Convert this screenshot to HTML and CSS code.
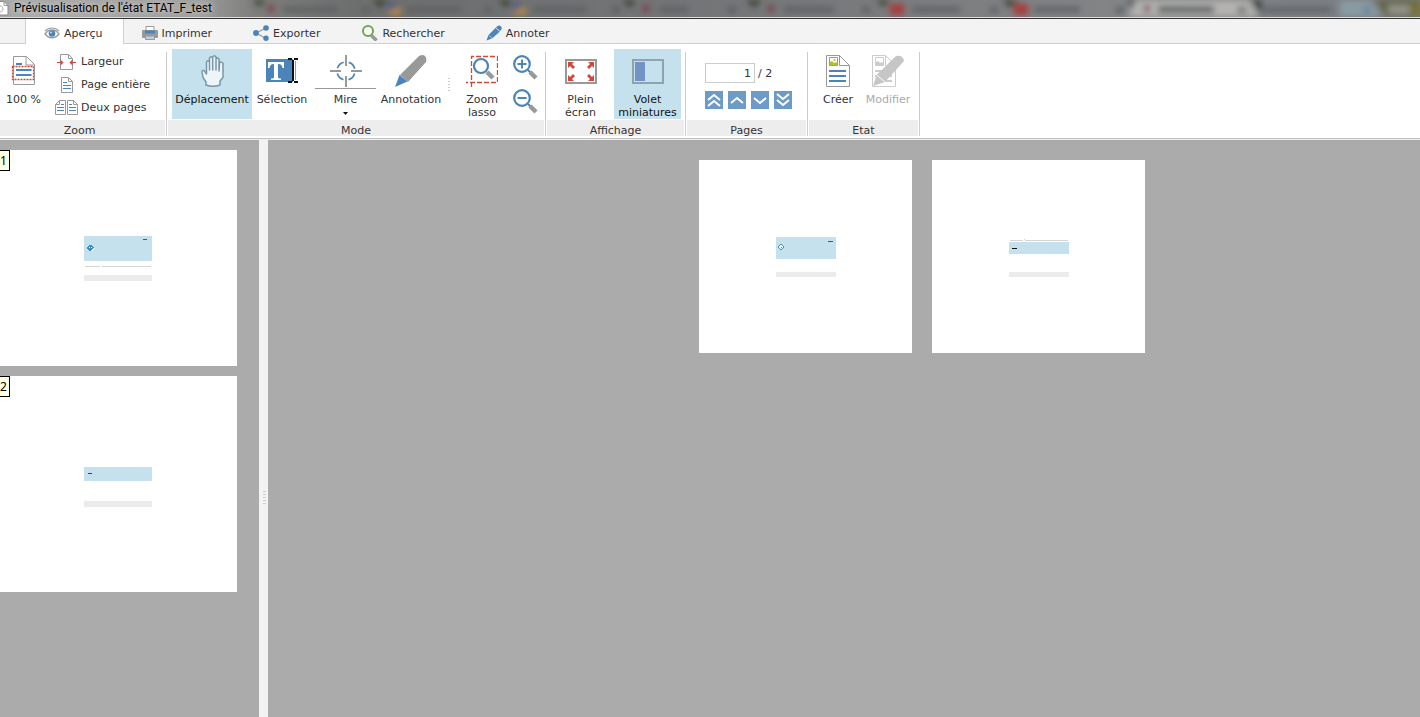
FILE: index.html
```html
<!DOCTYPE html>
<html lang="fr">
<head>
<meta charset="utf-8">
<title>Prévisualisation de l'état ETAT_F_test</title>
<link rel="stylesheet" href="styles.css">
</head>
<body>
<header class="titlebar">
  <svg class="glass" viewBox="0 0 1420 17" preserveAspectRatio="none" aria-hidden="true">
    <defs>
      <filter id="soft" x="-5%" y="-50%" width="110%" height="200%"><feGaussianBlur stdDeviation="3"/></filter>
      <linearGradient id="base" x1="0" x2="1" y1="0" y2="0">
        <stop offset="0" stop-color="#a9a9a9"/><stop offset=".14" stop-color="#9c9c9b"/><stop offset=".18" stop-color="#7d7d7c"/><stop offset=".25" stop-color="#6d6e6e"/><stop offset=".5" stop-color="#737577"/><stop offset=".8" stop-color="#838587"/><stop offset="1" stop-color="#787a7c"/>
      </linearGradient>
    </defs>
    <rect width="1420" height="17" fill="url(#base)"/>
    <g filter="url(#soft)">
      <path d="M252 0h14l-6 7zM372 0h16l-8 8zM498 0h14l-6 8zM622 0h14l-6 8zM746 0h16l-8 8zM876 0h14l-6 7zM1002 0h16l-8 8zM1128 0h14l-8 14zM1250 0h14l-2 14z" fill="#3a4230"/>
      <path d="M1136 0h113l10 17H1128z" fill="#b3b2b1"/>
      <path d="M1262 0h108l14 17H1262z" fill="#7b8085"/>
      <path d="M1340 0h30l12 17h-42z" fill="#899ba3"/>
      <path d="M1376 0h44v17h-34z" fill="#626342"/>
      <rect x="1388" y="5" width="22" height="9" fill="#94948a"/>
      <rect x="1412" y="2" width="8" height="15" fill="#77722e"/>
      <g fill="#5c5e60">
        <rect x="283" y="7" width="54" height="5"/><rect x="407" y="7" width="54" height="5"/><rect x="533" y="7" width="54" height="5"/><rect x="660" y="7" width="28" height="5"/><rect x="784" y="7" width="50" height="5"/><rect x="912" y="7" width="48" height="5"/><rect x="1034" y="7" width="46" height="5"/><rect x="1158" y="6" width="56" height="7"/><rect x="1264" y="7" width="68" height="5"/>
        <rect x="362" y="7" width="8" height="6"/><rect x="484" y="7" width="8" height="6"/><rect x="612" y="7" width="8" height="6"/><rect x="728" y="7" width="8" height="6"/><rect x="862" y="7" width="8" height="6"/><rect x="990" y="7" width="8" height="6"/><rect x="1116" y="7" width="8" height="6"/><rect x="1238" y="7" width="8" height="6"/>
      </g>
      <g fill="#7d3b45"><rect x="268" y="5" width="6" height="7"/><rect x="643" y="5" width="6" height="7"/><rect x="768" y="5" width="6" height="7"/><rect x="1144" y="5" width="6" height="7"/></g>
      <g fill="#a83a3a"><rect x="890" y="4" width="14" height="11"/><rect x="1014" y="4" width="14" height="11"/></g>
      <g fill="#b98a3c"><rect x="389" y="8" width="12" height="7"/><rect x="514" y="8" width="12" height="7"/></g>
      <g fill="#44598a"><rect x="388" y="3" width="7" height="7"/><rect x="513" y="3" width="7" height="7"/></g>
      <rect x="1364" y="7" width="6" height="6" fill="#4c789e"/>
    </g>
  </svg>
  <svg class="doc" width="9" height="16" viewBox="0 0 9 16" aria-hidden="true"><path d="M0 1.500h4l4 4v9.500H0" fill="#fff" stroke="#8a8a8a"/><path d="M4 1.500v4h4" fill="none" stroke="#999"/><path d="M0 6c4 0 4 6 0 6" fill="none" stroke="#aaa"/></svg>
  <h1 class="title">Prévisualisation de l'état ETAT_F_test</h1>
</header>

<nav class="tabs">
  <button class="tab active"><svg width="16" height="16" viewBox="0 0 16 16"><path d="M1 9c4-5.500 10-5.500 14 0-4 5-10 5-14 0z" fill="#fff" stroke="#999" stroke-width="1.300"/><path d="M1 6c4-4 10-4 14 0" fill="none" stroke="#999" stroke-width="1.200"/><circle cx="8" cy="8.500" r="3.300" fill="#4a84b8"/><circle cx="7" cy="7.500" r="1" fill="#cde"/></svg>Aperçu</button>
  <button class="tab"><svg width="16" height="16" viewBox="0 0 16 16"><path d="M4 6V1.500h8V6" fill="#fff" stroke="#999"/><rect y="5" width="16" height="8" rx="1" fill="#999"/><path d="M3 5.500h10v3H3z" fill="#4a84b8"/><path d="M3.500 11h9v3.500h-9z" fill="#b9d0e4" stroke="#999"/></svg>Imprimer</button>
  <button class="tab"><svg width="16" height="16" viewBox="0 0 16 16"><path d="M13 3L3 8l10 5.500" fill="none" stroke="#999" stroke-width="1.200"/><g fill="#4a84b8"><circle cx="13" cy="3" r="2.800"/><circle cx="3" cy="8" r="2.900"/><circle cx="13" cy="13.200" r="2.700"/></g></svg>Exporter</button>
  <button class="tab"><svg width="17" height="16" viewBox="0 0 17 16"><path d="M10.500 10.500l5 5" stroke="#999" stroke-width="3.500"/><circle cx="7" cy="6" r="5" fill="#fff" stroke="#6aa84f" stroke-width="2"/></svg>Rechercher</button>
  <button class="tab"><svg width="16" height="16" viewBox="0 0 16 16"><path d="M.5 15.500l2-5.500L10 2.500l4 4L6 13.500z" fill="#4a84b8"/><path d="M11 1.500q2.500-2 4 0t0 3.500l-1 1-4-3.500z" fill="#4a84b8"/><path d="M10 3l3.500 3.500M3 10.500l3 2.500" stroke="#c9dbea" stroke-width=".8"/></svg>Annoter</button>
</nav>

<section class="ribbon">
  <div class="group group-zoom">
    <div class="tools">
      <button class="tool tool-percent">
        <svg width="26" height="32" viewBox="0 0 26 32"><path d="M2.500 1.500h13l8 8v20h-21z" fill="#fff" stroke="#999"/><path d="M15 1.500v8.500h8.500" fill="none" stroke="#999"/><path d="M5 9h6M5 15h15.500M5 20h15.500" stroke="#4a84b8" stroke-width="2"/><path d="M1.500 11.500h21v13h-21z" fill="none" stroke="#d1473a" stroke-width="1.300" stroke-dasharray="2 1"/></svg>
        <span>100 %</span>
      </button>
      <div class="fit-list">
        <button class="fit"><svg width="24" height="18" viewBox="0 0 24 18"><path d="M6.500 1.500h8l4 4v11h-12z" fill="#fff" stroke="#999"/><path d="M14.500 1.500v4h4" fill="none" stroke="#999"/><path d="M3 9.500h5M22 9.500h-5" stroke="#d1473a"/><path d="M6.500 6.500l3 3-3 3zM18.500 6.500l-3 3 3 3z" fill="#d1473a"/></svg>Largeur</button>
        <button class="fit"><svg width="24" height="18" viewBox="0 0 24 18"><path d="M7.500 1.500h7l4 4v11h-11z" fill="#fff" stroke="#999"/><path d="M14.500 1.500v4h4" fill="none" stroke="#999"/><path d="M9 6.500h4M9 9.500h8M9 12.500h8" stroke="#4a84b8"/></svg>Page entière</button>
        <button class="fit"><svg width="24" height="18" viewBox="0 0 24 18"><g fill="#fff" stroke="#999"><path d="M1.500 5.500l4-4h6v14h-10zM13.500 1.500h6l4 4v10h-10z"/><path d="M5.500 1.500v4h-4M19.500 1.500v4h4" fill="none"/></g><path d="M7 5.500h3M3 8.500h7M3 11.500h7M15 5.500h3M15 8.500h7M15 11.500h7" stroke="#4a84b8"/></svg>Deux pages</button>
      </div>
    </div>
    <h2 class="caption">Zoom</h2>
  </div>
  <span class="divider"></span>

  <div class="group group-mode">
    <div class="tools">
      <button class="tool tool-move selected">
        <svg width="32" height="32" viewBox="0 0 32 32"><path d="M10 30v-3L7 22.500l-1-6q.5-2 2.500-.5l2 3V7q1.500-2.500 3 0v8V3q1.500-2.500 3.200 0v12V2q1.600-2.500 3.300 0v13V4q1.500-2 3 0v12l.5-8q2-2 3.500.5v14L24 26v4q-7 2.500-14 0z" fill="#edf4fa" stroke="#7996a6" stroke-width="1.500" stroke-linejoin="round"/></svg>
        <span>Déplacement</span>
      </button>
      <button class="tool tool-select">
        <svg width="32" height="32" viewBox="0 0 32 32"><path d="M0 4h27v23H0z" fill="#4a84b8"/><path d="M2 7h16v6h-1.500q-.5-4-4-4H12v13q0 1.500 3 1.500V25H5v-1.500q3 0 3-1.500V9h-.5q-3.500 0-4 4H2z" fill="#fff"/><path d="M22 4h4M28 4h4M22 27h4M28 27h4M27 5v21" stroke="#111" stroke-width="2"/><path d="M29.500 6v19" stroke="#999"/></svg>
        <span>Sélection</span>
      </button>
      <button class="tool tool-cross">
        <svg width="32" height="32" viewBox="0 0 32 32"><circle cx="16" cy="16" r="9" fill="none" stroke="#4a84b8" stroke-width="1.700" stroke-dasharray="9 5.137" stroke-dashoffset="-2.500"/><path d="M16 0v11M16 21v11M0 16h11M21 16h11" stroke="#999" stroke-width="2"/></svg>
        <span>Mire</span>
        <svg class="caret" width="5" height="3" viewBox="0 0 5 3"><path d="M0 0h5L2.500 3z" fill="#111"/></svg>
      </button>
      <button class="tool tool-annotate">
        <svg width="32" height="32" viewBox="0 0 32 32"><path d="M5 20L24 1q4-2 6 0t1 6L13 27z" fill="#999"/><path d="M4.500 20l8 6.500L0 32z" fill="#4a84b8"/></svg>
        <span>Annotation</span>
      </button>
      <span class="dots"></span>
      <button class="tool tool-lasso">
        <svg width="32" height="32" viewBox="0 0 32 32"><path d="M5.500 32V1.500h26v26H0" fill="none" stroke="#d1473a" stroke-width="1.300" stroke-dasharray="5 2"/><path d="M21 17l6 6" stroke="#999" stroke-width="4.500"/><circle cx="15" cy="11" r="7" fill="#fff" stroke="#4a84b8" stroke-width="2.200"/></svg>
        <span>Zoom<br>lasso</span>
      </button>
      <div class="zoom-pair">
        <button class="icon-button" aria-label="Agrandir"><svg width="25" height="25" viewBox="0 0 25 25"><path d="M15 15l3 3" stroke="#4a84b8" stroke-width="2"/><path d="M17 17l6 6" stroke="#999" stroke-width="4.500"/><circle cx="9" cy="9" r="7.800" fill="#fff" stroke="#4a84b8" stroke-width="2.200"/><path d="M4.500 9h9M9 4.500v9" stroke="#4a84b8" stroke-width="2"/></svg></button>
        <button class="icon-button" aria-label="Réduire"><svg width="25" height="25" viewBox="0 0 25 25"><path d="M15 15l3 3" stroke="#4a84b8" stroke-width="2"/><path d="M17 17l6 6" stroke="#999" stroke-width="4.500"/><circle cx="9" cy="9" r="7.800" fill="#fff" stroke="#4a84b8" stroke-width="2.200"/><path d="M4.500 9h9" stroke="#4a84b8" stroke-width="2"/></svg></button>
      </div>
    </div>
    <h2 class="caption">Mode</h2>
  </div>
  <span class="divider"></span>

  <div class="group group-display">
    <div class="tools">
      <button class="tool tool-full">
        <svg width="32" height="32" viewBox="0 0 32 32"><path d="M1 5h30v23H1z" fill="#fff" stroke="#999" stroke-width="2"/><g fill="#d1473a"><path d="M3 7h6L7 9l3 3-2 2-3-3-2 2zM29 7h-6l2 2-3 3 2 2 3-3 2 2zM3 26h6l-2-2 3-3-2-2-3 3-2-2zM29 26h-6l2-2-3-3 2-2 3 3 2-2z"/></g></svg>
        <span>Plein<br>écran</span>
      </button>
      <button class="tool tool-thumbs selected">
        <svg width="32" height="32" viewBox="0 0 32 32"><path d="M1 5h30v23H1z" fill="#c5e1ee" stroke="#8fa3ad" stroke-width="2"/><path d="M3 7h10v19H3z" fill="#7193c5"/></svg>
        <span>Volet<br>miniatures</span>
      </button>
    </div>
    <h2 class="caption">Affichage</h2>
  </div>
  <span class="divider"></span>

  <div class="group group-pages">
    <div class="tools pager">
      <label class="page-field"><input class="page-input" type="text" value="1" aria-label="Page">/ 2</label>
      <div class="pager-buttons">
        <button class="nav-button" aria-label="Première page"><svg viewBox="0 0 18 18"><path d="M3 9l6-5 6 5M3 15l6-5 6 5"/></svg></button>
        <button class="nav-button" aria-label="Page précédente"><svg viewBox="0 0 18 18"><path d="M3 12l6-5 6 5"/></svg></button>
        <button class="nav-button" aria-label="Page suivante"><svg viewBox="0 0 18 18"><path d="M3 7l6 5 6-5"/></svg></button>
        <button class="nav-button" aria-label="Dernière page"><svg viewBox="0 0 18 18"><path d="M3 3l6 5 6-5M3 9l6 5 6-5"/></svg></button>
      </div>
    </div>
    <h2 class="caption">Pages</h2>
  </div>
  <span class="divider"></span>

  <div class="group group-report">
    <div class="tools">
      <button class="tool tool-create">
        <svg width="24" height="32" viewBox="0 0 24 32"><path d="M.5.500h13l10 10v21H.5z" fill="#fff" stroke="#999"/><path d="M13.500.500v10h10" fill="none" stroke="#999"/><path d="M3.500 2.500h8v8h-8z" fill="#fff" stroke="#999"/><path d="M4 10V7l2-1 2 2 2-1 1 1v2z" fill="#a9c52f"/><circle cx="8.500" cy="5" r="1.200" fill="#e8c23a"/><path d="M3 16h17M3 21h17M3 26h17" stroke="#4a84b8" stroke-width="2"/></svg>
        <span>Créer</span>
      </button>
      <button class="tool tool-edit" disabled>
        <svg width="32" height="32" viewBox="0 0 32 32"><path d="M.5.500h13l10 10v21H.5z" fill="#fff" stroke="#ccc"/><path d="M13.500.500v10h10" fill="none" stroke="#ccc"/><path d="M3.500 2.500h8v8h-8z" fill="#fff" stroke="#ccc"/><path d="M4 10V7l2-1 2 2 2-1 1 1v2z" fill="#ccc"/><path d="M3 16h17M3 21h17M3 26h17" stroke="#ccc" stroke-width="2"/><path d="M4.500 20L24 1q4-1 6 1t2 4L13 27 1 31z" fill="#c6c6c6"/><path d="M4.500 20l8 6.500" stroke="#fff"/></svg>
        <span>Modifier</span>
      </button>
    </div>
    <h2 class="caption">Etat</h2>
  </div>
  <span class="divider"></span>
</section>

<main class="workspace">
  <aside class="thumbnails">
    <button class="thumb" aria-label="Page 1">
      <svg class="sheet" viewBox="0 0 237 216" shape-rendering="crispEdges"><path d="M84 86h68v25H84z" fill="#c5e1ee"/><path d="M89 95h3v1h1v1h1v1h-1v1h-1v1h-1v1h-2v-1h-1v-1h-1v-2h1v-1h1z" fill="#3b91bd"/><path d="M89 97h1v1h-1zM91 97h1v1h-1zM94 98h1v1h-1zM93 99h1v1h-1zM92 100h1v1h-1z" fill="#fff"/><path d="M143 89h4v1h-4z" fill="#555"/><path d="M85 116h15v1H85zM102 116h49v1h-49z" fill="#d4d4d4"/><path d="M84 125h68v6H84z" fill="#ebebeb"/></svg>
      <span class="badge">1</span>
    </button>
    <button class="thumb" aria-label="Page 2">
      <svg class="sheet" viewBox="0 0 237 216" shape-rendering="crispEdges"><path d="M84 91h68v14H84z" fill="#c5e1ee"/><path d="M88 97h4v1h-4z" fill="#345"/><path d="M84 125h68v6H84z" fill="#ebebeb"/></svg>
      <span class="badge">2</span>
    </button>
  </aside>
  <div class="splitter"><span class="grip"></span></div>
  <section class="viewer">
    <svg class="page" viewBox="0 0 213 193" shape-rendering="crispEdges"><path d="M77 77h60v22H77z" fill="#c5e1ee"/><path d="M79 87l3-3 3 3-3 3z" fill="#fff" stroke="#3b91bd"/><path d="M82 87h1v1h-1z" fill="#3b91bd"/><path d="M129 81h5v1h-5z" fill="#555"/><path d="M77 112h60v5H77z" fill="#ebebeb"/></svg>
    <svg class="page" viewBox="0 0 213 193" shape-rendering="crispEdges"><path d="M78 80h13v1H78zM93 80h43v1H93zM92 79h1v1h-1z" fill="#d4d4d4"/><path d="M77 82h60v12H77z" fill="#c5e1ee"/><path d="M80 88h5v1h-5z" fill="#111"/><path d="M77 112h60v5H77z" fill="#ebebeb"/></svg>
  </section>
</main>
</body>
</html>
```

FILE: styles.css
```css
* { box-sizing: border-box; }

body {
  margin: 0;
  min-height: 100vh;
  display: flex;
  flex-direction: column;
  background: #fff;
  color: #333;
  font: 11px/13px Verdana, "DejaVu Sans", sans-serif;
}

button {
  margin: 0;
  padding: 0;
  border: 0;
  background: none;
  color: inherit;
  font: inherit;
}

svg { display: block; flex: none; }

/* Title bar */
.titlebar {
  position: relative;
  display: flex;
  align-items: center;
  gap: 5px;
  height: 19px;
  padding-bottom: 2px;
  overflow: hidden;
  border-bottom: 1px solid #333;
  background: #ddd;
}
.glass { position: absolute; top: 0; left: 0; width: 100%; height: 17px; }
.doc { position: relative; }
.title {
  position: relative;
  margin: 0;
  color: #000;
  font: 12px/16px "Segoe UI", Roboto, sans-serif;
  text-shadow: 0 0 6px #ddd, 0 0 8px #ccc;
}

/* Tabs */
.tabs {
  display: flex;
  height: 25px;
  padding-left: 25px;
  background: #f3f3f3;
  box-shadow: inset 0 -1px #d0d0d0;
}
.tab {
  display: flex;
  align-items: center;
  gap: 4px;
  padding: 3px 23px 0 18px;
}
.tab.active {
  padding-right: 20px;
  background: #fff;
  border: solid #d0d0d0;
  border-width: 0 1px;
}

/* Ribbon */
.ribbon {
  display: flex;
  height: 96px;
  padding: 5px 0 3px;
  border-bottom: 1px solid #ececec;
  box-shadow: inset 0 -1px #c4c4c4;
}
.group { display: flex; flex-direction: column; }
.group-zoom { width: 165px; }
.group-zoom .caption { padding-right: 6px; }
.group-mode { width: 376px; }
.group-display { width: 137px; }
.group-pages { width: 119px; }
.group-report { width: 109px; }
.divider { width: 1px; margin: 3px 1px 0; background: #ccc; }
.tools { display: flex; height: 71px; }
.caption {
  margin: 0;
  height: 16px;
  background: #ededed;
  font: inherit;
  line-height: 21px;
  text-align: center;
}
.tool {
  display: flex;
  flex-direction: column;
  align-items: center;
  gap: 6px;
  height: 70px;
  padding-top: 6px;
  white-space: nowrap;
}
.tool:disabled { color: #aaa; }
.selected { background: #c5e1ee; color: #111; }
.tool-percent { width: 47px; }
.tool-move { width: 80px; margin-left: 4px; }
.tool-select { width: 60px; }
.tool-cross {
  width: 61px;
  margin: 0 2px 0 3px;
  background: linear-gradient(#999, #999) 0 39px / 100% 1px no-repeat;
}
.tool-annotate { width: 66px; }
.dots {
  width: 2px;
  height: 14px;
  margin: 29px 9px 0 4px;
  background: repeating-linear-gradient(#ccc 0 1px, transparent 1px 3px);
}
.tool-lasso { width: 46px; }
.zoom-pair { display: flex; flex-direction: column; gap: 9px; padding: 6px 0 0 8px; }
.tool-full { width: 67px; }
.tool-thumbs { width: 67px; }
.tool-create { width: 50px; margin-left: 4px; }
.tool-edit { width: 50px; }

.fit-list { padding: 1px 0 0 7px; }
.fit { display: flex; align-items: center; gap: 3px; height: 23px; }

.pager { flex-direction: column; gap: 8px; padding: 14px 0 0 18px; }
.page-field { display: flex; align-items: center; gap: 3px; }
.page-input {
  width: 50px;
  height: 20px;
  padding: 1px 3px 0;
  border: 1px solid #ccc;
  background: #fff;
  color: inherit;
  font: inherit;
  text-align: right;
}
.pager-buttons { display: flex; gap: 5px; }
.nav-button { width: 18px; height: 18px; background: #6c9bc7; }
.nav-button path { fill: none; stroke: #fff; stroke-width: 2; }

/* Workspace */
.workspace { flex: 1; display: flex; background: #ababab; }
.thumbnails {
  display: flex;
  flex-direction: column;
  gap: 10px;
  width: 259px;
  padding: 10px 22px 10px 0;
}
.thumb { position: relative; background: #fff; }
.sheet { width: 100%; }
.badge {
  position: absolute;
  top: 0;
  left: 0;
  padding: 3px 2px 3px 0;
  border: 1px solid #000;
  border-left: 0;
  background: #ffffe1;
  color: #000;
  font: 12px/13px "Noto Sans", sans-serif;
}
.splitter {
  display: flex;
  justify-content: center;
  align-items: center;
  width: 9px;
  padding: 137px 0 0 2px;
  background: #f3f3f3;
}
.grip {
  width: 3px;
  height: 13px;
  background: repeating-linear-gradient(#ccc 0 1px, transparent 1px 3px);
}
.viewer {
  flex: 1;
  display: flex;
  justify-content: center;
  align-items: flex-start;
  gap: 20px;
  padding: 20px 0 20px 156px;
}
.page { width: 213px; background: #fff; }
```
